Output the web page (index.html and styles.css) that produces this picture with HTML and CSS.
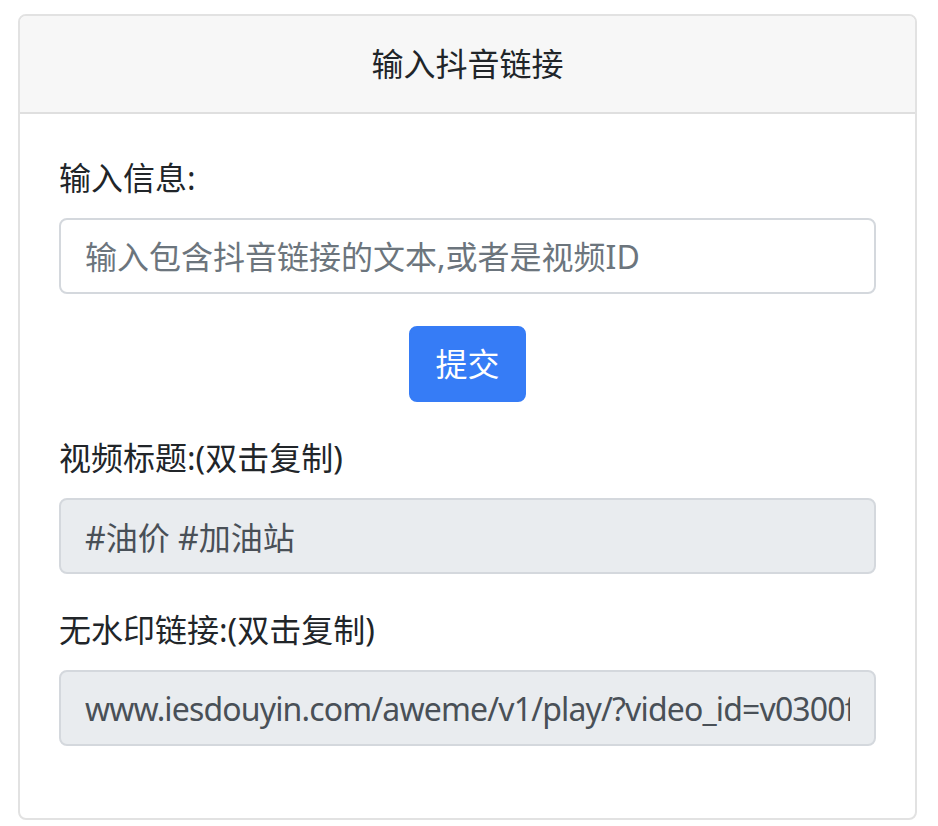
FILE: index.html
```html
<!DOCTYPE html>
<html lang="zh-CN">
<head>
<meta charset="utf-8">
<title>输入抖音链接</title>
<link rel="stylesheet" href="styles.css">
</head>
<body>
<div class="page">
  <div class="card">
    <div class="card-header">输入抖音链接</div>
    <div class="card-body">
      <div class="form-group">
        <label class="label" for="info">输入信息:</label>
        <input class="form-control" id="info" type="text" placeholder="输入包含抖音链接的文本,或者是视频ID">
      </div>
      <div class="actions">
        <button class="btn" type="button">提交</button>
      </div>
      <div class="form-group">
        <label class="label" for="title">视频标题:(双击复制)</label>
        <input class="form-control readonly" id="title" type="text" readonly value="#油价 #加油站">
      </div>
      <div class="form-group">
        <label class="label" for="link">无水印链接:(双击复制)</label>
        <input class="form-control readonly url" id="link" type="text" readonly value="www.iesdouyin.com/aweme/v1/play/?video_id=v0300fg10000c8qk3ojc77u5b1pt8hcg&amp;ratio=720p&amp;line=0">
      </div>
    </div>
  </div>
</div>
</body>
</html>
```

FILE: styles.css
```css
* {
  box-sizing: border-box;
}

html, body {
  margin: 0;
  padding: 0;
  background: #ffffff;
}

body {
  font-family: "Noto Sans", "Noto Sans CJK SC", sans-serif;
  font-size: 32px;
  line-height: 1.5;
  color: #212529;
}

.page {
  padding: 14px 21px 0 18px;
}

.card {
  width: 899px;
  border: 2px solid #e2e2e2;
  border-radius: 8px;
  background: #ffffff;
  overflow: hidden;
}

.card-header {
  height: 98px;
  display: flex;
  align-items: center;
  justify-content: center;
  background: #f7f7f7;
  border-bottom: 2px solid #dfdfdf;
  font-size: 32px;
  color: #212529;
}

.card-body {
  padding: 40px 39px 40px 39px;
}

.form-group {
  margin-bottom: 32px;
}

.label {
  display: block;
  margin-bottom: 16px;
  line-height: 48px;
  font-size: 32px;
  color: #212529;
}

.form-control {
  display: block;
  width: 100%;
  height: 76px;
  padding: 12px 24px;
  font-family: "Noto Sans", "Noto Sans CJK SC", sans-serif;
  font-size: 32px;
  line-height: 48px;
  color: #495057;
  background: #ffffff;
  border: 2px solid #d4d8dd;
  border-radius: 8px;
  outline: none;
}

.form-control::placeholder {
  color: #6c757d;
  opacity: 1;
}

.form-control.readonly {
  background: #e9ecef;
}

.form-control.url {
  letter-spacing: -0.85px;
}

.actions {
  display: flex;
  justify-content: center;
  margin-bottom: 32px;
}

.btn {
  height: 76px;
  padding: 0 24px;
  font-family: "Noto Sans", "Noto Sans CJK SC", sans-serif;
  font-size: 32px;
  line-height: 48px;
  color: #ffffff;
  background: #367cf6;
  border: 2px solid #367cf6;
  border-radius: 8px;
}
```
